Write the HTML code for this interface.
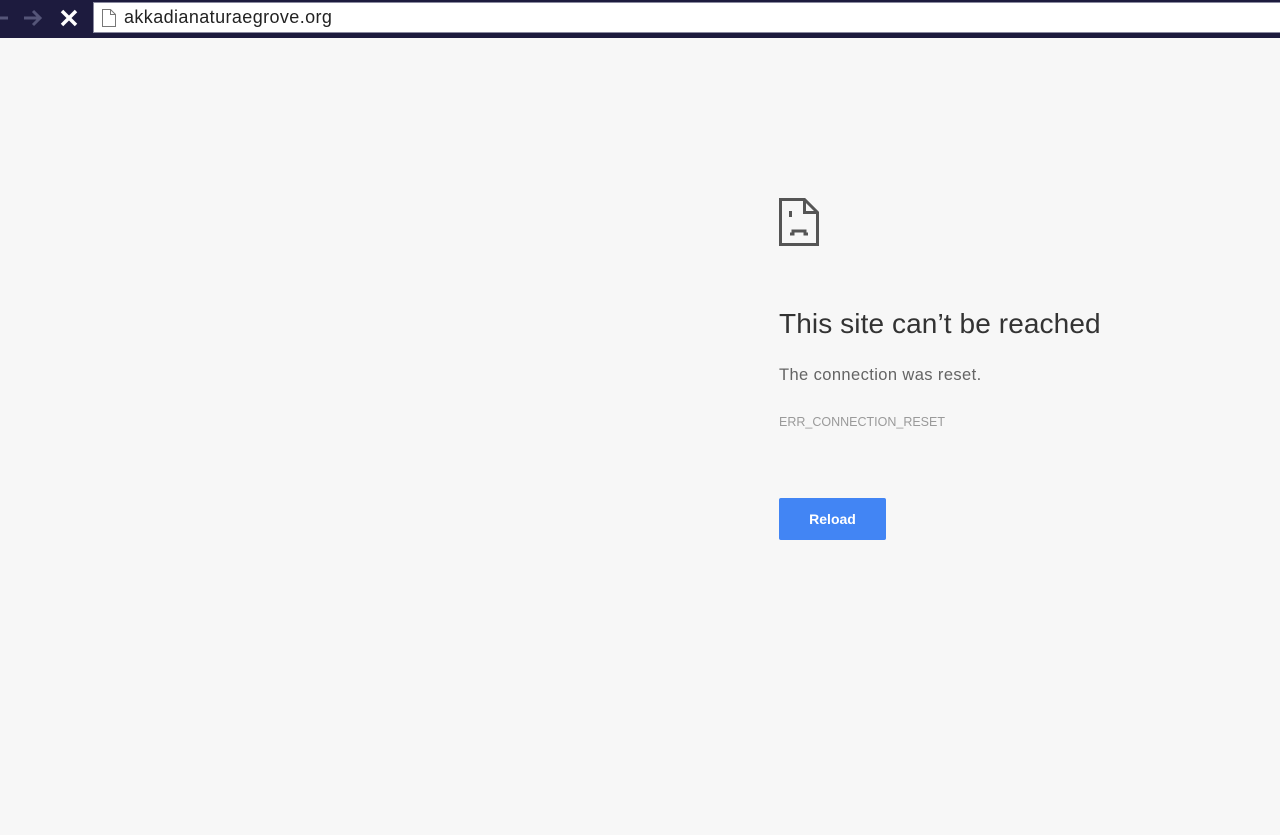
<!DOCTYPE html>
<html><head><style>
body{margin:0;width:1280px;height:835px;background:#f7f7f7;font-family:"Liberation Sans",sans-serif;position:relative;overflow:hidden}
.bar{position:absolute;left:0;top:0;width:1280px;height:38px;background:#1d1b3e}
.addr{position:absolute;left:93px;top:2px;width:1190px;height:31px;background:#fff;border:1px solid #8a8aa0;box-sizing:border-box}
.url{position:absolute;left:124px;top:7px;font-size:18px;color:#222;letter-spacing:0.4px}
h1{position:absolute;left:779px;top:308px;margin:0;font-weight:normal;font-size:28px;color:#333;letter-spacing:0.1px}
.p{position:absolute;left:779px;top:366px;font-size:16.5px;color:#646464;letter-spacing:0.4px}
.e{position:absolute;left:779px;top:415px;font-size:12.5px;color:#9a9a9a}
.btn{position:absolute;left:779px;top:498px;width:107px;height:42px;background:#4285f4;border-radius:2px;color:#fff;font-size:14px;font-weight:bold;text-align:center;line-height:42px}
</style></head><body>
<div class="bar"></div>
<svg style="position:absolute;left:0;top:8px" width="85" height="22">
<path d="M0 10h8" stroke="#555578" stroke-width="3"/>
<path d="M24 10h16M33 3l7 7-7 7" stroke="#555578" stroke-width="3" fill="none"/>
<path d="M62 3l14 14M76 3l-14 14" stroke="#fff" stroke-width="3.5"/>
</svg>
<div class="addr"></div>
<svg style="position:absolute;left:101px;top:8px" width="16" height="20"><path d="M1.5 1.5h8l5 5v12h-13z M9.5 1.5v5h5" fill="#fff" stroke="#777" stroke-width="1"/></svg>
<div class="url">akkadianaturaegrove.org</div>
<svg style="position:absolute;left:778px;top:197px" width="42" height="52">
<path d="M2.5 2.5h24l13 13v32h-37z" fill="none" stroke="#555" stroke-width="3"/>
<path d="M26.5 2.5v13h13" fill="none" stroke="#555" stroke-width="3"/>
<rect x="11" y="14" width="3" height="6" fill="#555"/>
<path d="M12 37h3v-3h12v3h3" fill="none" stroke="#555" stroke-width="3"/>
</svg>
<h1>This site can’t be reached</h1>
<div class="p">The connection was reset.</div>
<div class="e">ERR_CONNECTION_RESET</div>
<div class="btn">Reload</div>
</body></html>
